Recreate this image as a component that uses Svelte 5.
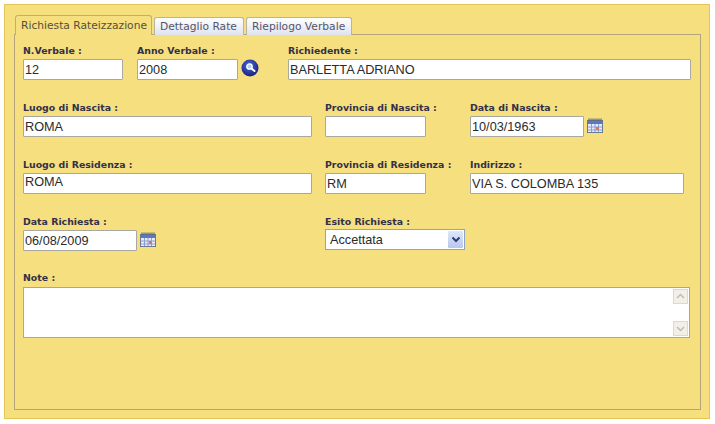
<script>
  let verbale = "12";
  let anno = "2008";
  let richiedente = "BARLETTA ADRIANO";
  let tabs = ["Richiesta Rateizzazione", "Dettaglio Rate", "Riepilogo Verbale"];
</script>

{#snippet calendar()}
  <svg class="cal" width="17" height="15" viewBox="0 0 17 15">
    <rect x="0.5" y="2.5" width="15" height="12" fill="#e8ecf6" stroke="#6a7a94" />
    <rect x="1" y="3" width="14" height="3" fill="#5a78c8" />
    <path d="M2 0.5v2M4 0.5v2M6 0.5v2M8 0.5v2M10 0.5v2M12 0.5v2M14 0.5v2" stroke="#44506a" />
    <path d="M1 9h14M1 12h14M4.500 6v8M8 6v8M11.500 6v8" stroke="#8d9ed0" />
    <rect x="9" y="9" width="3" height="3" fill="#d9766c" />
  </svg>
{/snippet}

<div class="page">
  <div class="outer">
    <div class="tabs">
      {#each tabs as t, i}
        <div class="tab" class:active={i === 0}>{t}</div>
      {/each}
    </div>
    <div class="panel">
      <div class="row first">
        <div class="field">
          <span class="lbl">N.Verbale :</span>
          <input class="in" style="width: 100px" value={verbale} />
        </div>
        <div class="field">
          <span class="lbl">Anno Verbale :</span>
          <div class="inline">
            <input class="in" style="width: 101px" value={anno} />
            <svg class="search" width="18" height="18" viewBox="0 0 18 18">
              <defs>
                <radialGradient id="ball" cx="0.45" cy="0.35" r="0.75">
                  <stop offset="0" stop-color="#4a68dc" />
                  <stop offset="1" stop-color="#14166e" />
                </radialGradient>
              </defs>
              <circle cx="9" cy="9" r="8.500" fill="url(#ball)" />
              <circle cx="8.500" cy="7.500" r="2.700" fill="#a9d2f4" stroke="#fff" stroke-width="1.300" />
              <path d="M10.500 9.500l3 2.500" stroke="#fff" stroke-width="2" stroke-linecap="round" />
            </svg>
          </div>
        </div>
        <div class="field">
          <span class="lbl">Richiedente :</span>
          <input class="in" style="width: 403px" value={richiedente} />
        </div>
      </div>

      <div class="row">
        <div class="field">
          <span class="lbl">Luogo di Nascita :</span>
          <input class="in" style="width: 289px" value="ROMA" />
        </div>
        <div class="field">
          <span class="lbl">Provincia di Nascita :</span>
          <input class="in" style="width: 101px" value="" />
        </div>
        <div class="field">
          <span class="lbl">Data di Nascita :</span>
          <div class="inline">
            <input class="in" style="width: 114px" value="10/03/1963" />
            {@render calendar()}
          </div>
        </div>
      </div>

      <div class="row">
        <div class="field">
          <span class="lbl">Luogo di Residenza :</span>
          <input class="in tall" style="width: 289px" value="ROMA" />
        </div>
        <div class="field">
          <span class="lbl">Provincia di Residenza :</span>
          <input class="in" style="width: 101px" value="RM" />
        </div>
        <div class="field">
          <span class="lbl">Indirizzo :</span>
          <input class="in" style="width: 214px" value="VIA S. COLOMBA 135" />
        </div>
      </div>

      <div class="row">
        <div class="field">
          <span class="lbl">Data Richiesta :</span>
          <div class="inline">
            <input class="in" style="width: 114px" value="06/08/2009" />
            {@render calendar()}
          </div>
        </div>
        <div class="field">
          <span class="lbl">Esito Richiesta :</span>
          <div class="select">
            <span>Accettata</span>
            <span class="arrow">
              <svg width="10" height="8" viewBox="0 0 10 8">
                <path d="M1.500 1.500L5 5l3.500-3.500" fill="none" stroke="#2a3f78" stroke-width="2" />
              </svg>
            </span>
          </div>
        </div>
      </div>

      <div class="note">
        <span class="lbl">Note :</span>
        <div class="area">
          <div class="scroll">
            <svg width="15" height="15" viewBox="0 0 15 15">
              <rect x="0.500" y="0.500" width="14" height="14" fill="#f1efe6" stroke="#d6dad8" />
              <path d="M4 9l3.500-3.500L11 9" fill="none" stroke="#b4c0bc" stroke-width="1.500" />
            </svg>
            <svg width="15" height="15" viewBox="0 0 15 15">
              <rect x="0.500" y="0.500" width="14" height="14" fill="#f1efe6" stroke="#d6dad8" />
              <path d="M4 6l3.500 3.500L11 6" fill="none" stroke="#b4c0bc" stroke-width="1.500" />
            </svg>
          </div>
        </div>
      </div>
    </div>
  </div>
</div>

<style>
  :global(body) {
    margin: 0;
    background: #fff;
  }
  .page {
    width: 715px;
    height: 424px;
    padding: 4px 0 0 4px;
    box-sizing: border-box;
    font-family: "Liberation Sans", Arial, sans-serif;
  }
  .outer {
    width: 706px;
    height: 415px;
    box-sizing: border-box;
    background: #f5df7f;
    border: 1px solid #e6c455;
    padding: 10px 0 0 9px;
  }
  .tabs {
    display: flex;
    gap: 2px;
    height: 19px;
    padding-left: 1px;
    position: relative;
    z-index: 1;
  }
  .tab {
    font-family: "DejaVu Sans", sans-serif;
    font-size: 10.700px;
    color: #55556a;
    height: 18px;
    line-height: 18px;
    margin-top: 2px;
    padding: 0 6px 0 5px;
    background: linear-gradient(#fff, #dfe3ee);
    border: 1px solid #b8b4a0;
    border-bottom: none;
    border-radius: 3px 3px 0 0;
    box-sizing: border-box;
    white-space: nowrap;
  }
  .tab.active {
    background: #f5df7f;
    color: #55503a;
    height: 20px;
    line-height: 20px;
    margin-top: 0;
    padding: 0 4px 0 5px;
    border-color: #bcae80;
  }
  .panel {
    width: 687px;
    height: 376px;
    box-sizing: border-box;
    border: 1px solid #b5a57a;
    padding: 10px 0 0 8px;
  }
  .row {
    display: grid;
    grid-template-columns: 302px 145px 1fr;
    height: 57px;
  }
  .row.first {
    grid-template-columns: 114px 151px 1fr;
  }
  .field {
    display: flex;
    flex-direction: column;
    align-items: flex-start;
  }
  .lbl {
    display: block;
    font-family: "DejaVu Sans", sans-serif;
    font-size: 9.400px;
    font-weight: 700;
    line-height: 11px;
    height: 14px;
    color: #33304a;
    white-space: nowrap;
  }
  .inline {
    display: flex;
    align-items: center;
  }
  .in {
    display: block;
    height: 21px;
    box-sizing: border-box;
    margin: 0;
    padding: 0 1px;
    background: #fff;
    border: 1px solid #a8a8a0;
    border-radius: 1px;
    font-family: "Liberation Sans", Arial, sans-serif;
    font-size: 12.700px;
    color: #2a2a2a;
    outline: none;
  }
  .in.tall {
    padding-bottom: 4px;
  }
  .search {
    margin-left: 3px;
    margin-top: -4px;
  }
  .cal {
    margin-left: 3px;
    margin-top: -3px;
  }
  .select {
    width: 140px;
    height: 21px;
    box-sizing: border-box;
    margin-top: -1px;
    display: flex;
    align-items: center;
    justify-content: space-between;
    background: #fff;
    border: 1px solid #8ea4c4;
    padding-left: 4px;
    font-size: 12.700px;
    color: #2a2a2a;
  }
  .arrow {
    width: 15px;
    height: 17px;
    margin-right: 1px;
    display: flex;
    align-items: center;
    justify-content: center;
    background: linear-gradient(#dfe7f8, #b7c8ee);
    border-radius: 1px;
  }
  .note {
    margin-top: -1px;
  }
  .area {
    width: 667px;
    height: 51px;
    margin-top: 1px;
    box-sizing: border-box;
    background: #fff;
    border: 1px solid #a4a8a0;
    display: flex;
    justify-content: flex-end;
  }
  .scroll {
    width: 17px;
    padding: 1px 0;
    display: flex;
    flex-direction: column;
    justify-content: space-between;
    align-items: center;
  }
  .scroll svg {
    display: block;
  }
</style>
